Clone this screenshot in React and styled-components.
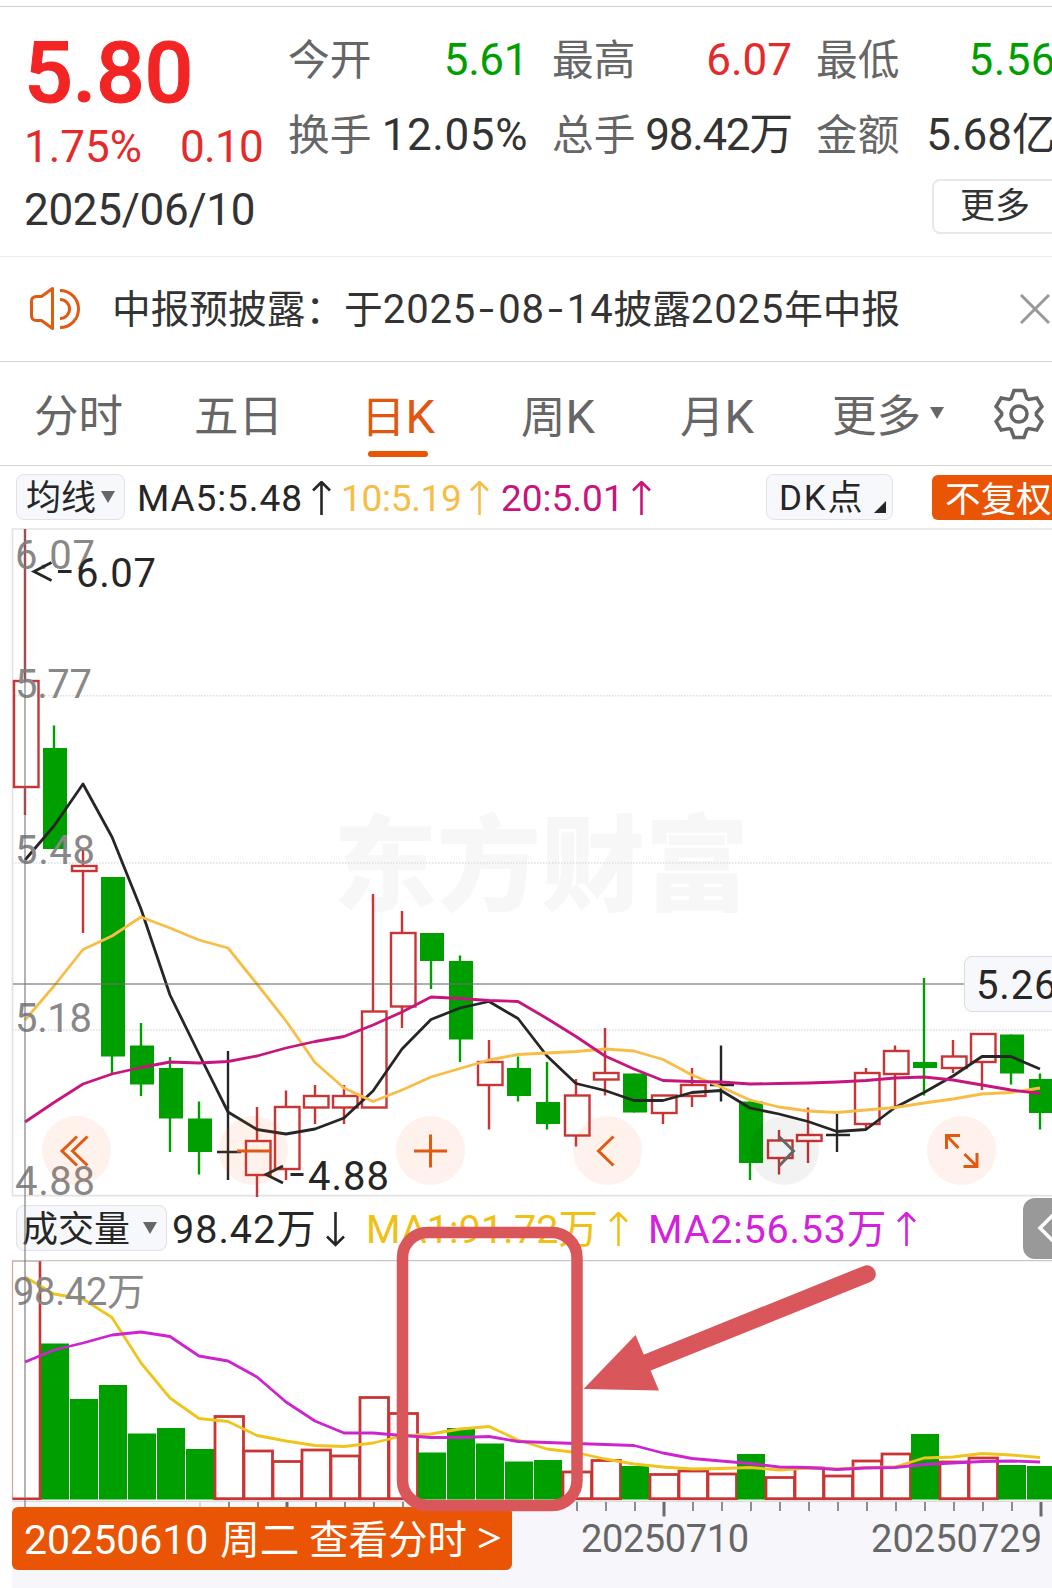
import React from "react";
import styled, { createGlobalStyle } from "styled-components";

const ORANGE = "#e95504";
const RED = "#c93535";
const GREEN = "#009f00";
const INK = "#262626";

const GlobalStyle = createGlobalStyle`
  * { box-sizing: border-box; }
  body {
    margin: 0;
    background: #fff;
    font-family: Roboto, "Noto Sans CJK SC", sans-serif;
  }
`;

const Page = styled.div`
  width: 1052px;
  height: 1588px;
  overflow: hidden;
  background: #fff;
  color: #333;
`;

const TopRule = styled.div`
  height: 7px;
  border-bottom: 1px solid #d2d2d2;
`;

/* ---------- quote summary ---------- */

const Summary = styled.section`
  display: flex;
  height: 250px;
  border-bottom: 1px solid #ebebeb;
`;

const QuoteColumn = styled.div`
  flex: none;
  width: 288px;
  padding: 21px 0 0 24px;
`;

const Price = styled.div`
  font-size: 86px;
  font-weight: 500;
  line-height: 90px;
  letter-spacing: -0.4px;
  -webkit-text-stroke: 1px #f22424;
  color: #f22424;
`;

const Change = styled.div`
  display: flex;
  gap: 38px;
  margin-top: 4px;
  font-size: 44px;
  line-height: 50px;
  color: #e42a2a;
`;

const ChangeAmount = styled.span`
  letter-spacing: -0.7px;
`;

const QuoteDate = styled.div`
  margin-top: 13px;
  font-size: 44px;
  line-height: 50px;
  letter-spacing: -0.3px;
  white-space: nowrap;
`;

const StatsColumn = styled.div`
  flex: none;
  width: 790px;
  padding-top: 28px;
`;

const StatsGrid = styled.div`
  display: grid;
  grid-template-columns: repeat(3, 241px);
  column-gap: 23px;
  row-gap: 25px;
`;

const Stat = styled.div`
  display: flex;
  justify-content: space-between;
  height: 50px;
  line-height: 50px;
  white-space: nowrap;
`;

const StatLabel = styled.span`
  padding-top: 1px;
  font-size: 41.7px;
  color: #666;
`;

const StatValue = styled.span`
  margin-right: 1px;
  font-size: 44px;
  letter-spacing: ${(p) => p.$track || 0}px;
  color: ${(p) => p.$color || "#333"};
`;

const MoreButton = styled.button`
  display: block;
  width: 140px;
  height: 55px;
  margin: 19px 0 0 644px;
  padding: 1px 0 0 26px;
  border: 2px solid #e8e8e8;
  border-radius: 8px;
  background: #fff;
  font: 35px/50px Roboto, "Noto Sans CJK SC", sans-serif;
  text-align: left;
  color: #333;
`;

/* ---------- notice ---------- */

const Notice = styled.section`
  display: flex;
  align-items: center;
  height: 105px;
  padding: 0 2px 1px 28px;
  border-bottom: 1px solid #d4d4d4;
`;

const NoticeText = styled.p`
  flex: 1;
  margin: 3px 0 0 30px;
  font-size: 38.7px;
  line-height: 50px;
  white-space: nowrap;
`;

const Digits = styled.span`
  font-size: 40px;
  letter-spacing: 0.85px;
`;

const Dash = styled.span`
  display: inline-block;
  width: 22px;
  text-align: center;
  transform: scaleX(1.35);
`;

/* ---------- tabs ---------- */

const Tabs = styled.nav`
  display: flex;
  height: 104px;
  padding-left: 34px;
  border-bottom: 1px solid #d4d4d4;
`;

const Tab = styled.div`
  flex: none;
  display: flex;
  width: ${(p) => p.$width}px;
  padding-top: 27px;
  font-size: 44.5px;
  line-height: 56px;
  white-space: nowrap;
  color: ${(p) => (p.$active ? "#e2570f" : "#666")};
`;

const TabLabel = styled.span`
  position: relative;
  height: 69px;

  &::after {
    content: "";
    display: ${(p) => (p.$active ? "block" : "none")};
    position: absolute;
    left: 7px;
    bottom: 1px;
    width: 60px;
    height: 6px;
    border-radius: 3px;
    background: ${ORANGE};
  }
`;

const TabLatin = styled.span`
  font-size: 47px;
`;

const Caret = styled.i`
  flex: none;
  width: 0;
  height: 0;
  border-left: 7.5px solid transparent;
  border-right: 7.5px solid transparent;
  border-top: 12px solid #666;
`;

const TabCaret = styled(Caret)`
  margin: 18px 0 0 9px;
`;

const GearButton = styled.div`
  padding-top: 24.5px;
`;

/* ---------- indicator rows ---------- */

const IndicatorRow = styled.div`
  display: flex;
  align-items: flex-start;
  height: ${(p) => p.$height}px;
  padding: ${(p) => p.$top}px 0 0 16px;
`;

const Chip = styled.div`
  flex: none;
  display: flex;
  align-items: center;
  justify-content: space-between;
  width: ${(p) => p.$width}px;
  height: 46px;
  margin-left: ${(p) => p.$gap || 0}px;
  padding: 0 ${(p) => p.$padRight || 9}px 0 ${(p) => p.$padLeft || 9}px;
  border: 1.5px solid #e0e2e8;
  border-radius: 8px;
  background: #f7f8fb;
  font-size: ${(p) => p.$size || 35}px;
  line-height: 44px;
  white-space: nowrap;
  color: ${INK};
`;

const ChipText = styled.span`
  padding-top: 4px;
  letter-spacing: ${(p) => p.$track || 0}px;
`;

const Corner = styled.i`
  align-self: flex-end;
  margin-bottom: 6px;
  border-left: 12px solid transparent;
  border-bottom: 12px solid ${INK};
`;

const Readout = styled.div`
  flex: none;
  display: flex;
  justify-content: space-between;
  align-items: center;
  width: ${(p) => p.$width}px;
  height: 46px;
  margin-left: ${(p) => p.$gap}px;
  padding-top: 3px;
  font-size: ${(p) => p.$size}px;
  line-height: 46px;
  letter-spacing: ${(p) => p.$track || 0}px;
  white-space: nowrap;
  color: ${(p) => p.$color};
`;

const AdjustButton = styled.div`
  flex: none;
  width: 140px;
  height: 45px;
  margin: 1px 0 0 39px;
  padding-left: 13px;
  border-radius: 6px;
  background: ${ORANGE};
  font-size: 35.5px;
  line-height: 50px;
  color: #fff;
`;

const DrawerHandle = styled.div`
  flex: none;
  width: 60px;
  height: 61px;
  margin: -7px 0 0 107px;
  padding: 10px 0 0 13px;
  border-radius: 12px;
  background: #999;
`;

/* ---------- charts ---------- */

const ChartArea = styled.section`
  position: relative;
`;

const Chart = styled.svg`
  display: block;
  overflow: visible;
`;

const CrosshairV = styled.div`
  position: absolute;
  top: 1px;
  left: 24px;
  width: 2px;
  height: 978px;
  background: rgba(110, 110, 110, 0.52);
`;

const ControlRow = styled.div`
  position: absolute;
  top: 587.5px;
  left: 42px;
  display: flex;
  gap: 108px;
`;

const RoundButton = styled.div`
  flex: none;
  width: 69px;
  height: 69px;
  border-radius: 50%;
  background: ${(p) => (p.$muted ? "rgba(0,0,0,0.05)" : "rgba(250,90,10,0.082)")};
  color: ${(p) => (p.$muted ? "#666" : "#e05a12")};
`;

const PriceTag = styled.div`
  position: absolute;
  top: 428px;
  left: 963.5px;
  width: 110px;
  height: 56px;
  padding-left: 11.5px;
  border: 1.5px solid #d9dbe1;
  border-radius: 8px;
  background: #f7f8fb;
  font-size: 40px;
  line-height: 57px;
  letter-spacing: 0.8px;
  color: ${INK};
`;

const DateBanner = styled.div`
  position: absolute;
  left: 12px;
  bottom: 18px;
  width: 499.5px;
  height: 63px;
  padding-left: 12px;
  border-radius: 6px;
  background: ${ORANGE};
  font-size: 39.5px;
  line-height: 67px;
  white-space: pre;
  color: #fff;
`;

const BannerDate = styled.span`
  margin-right: 2px;
  font-size: 41px;
`;

const BannerArrow = styled.svg`
  margin: 0 0 5px 11px;
`;

const Markup = styled.svg`
  position: absolute;
  left: 390px;
  bottom: 70px;
`;

const candles = [
  // kind, high, top, bottom, low
  ["up", 529, 681, 787, 815],
  ["down", 725.5, 748, 849, 849],
  ["up", 850, 866, 871, 933],
  ["down", 877, 877, 1056.5, 1073],
  ["down", 1023, 1045.5, 1084.5, 1096],
  ["down", 1057, 1068, 1118.5, 1152],
  ["down", 1101.5, 1118.5, 1152, 1174.5],
  ["flat", 1051, 1152, 1152, 1180],
  ["up", 1107, 1141, 1175, 1197],
  ["up", 1090.5, 1107, 1169, 1180],
  ["up", 1085, 1096, 1107.5, 1124],
  ["up", 1085, 1096, 1107.5, 1124],
  ["up", 894, 1011.5, 1107.5, 1107.5],
  ["up", 911, 933, 1006.5, 1028],
  ["down", 933, 933, 961, 989],
  ["down", 955.5, 961, 1039.5, 1062],
  ["up", 1040, 1062, 1085, 1129.5],
  ["down", 1056.5, 1068, 1096, 1101.5],
  ["down", 1062, 1102, 1124, 1129.5],
  ["up", 1079, 1095.5, 1135.5, 1146.5],
  ["up", 1028, 1073, 1079.5, 1095.5],
  ["down", 1073.5, 1073.5, 1112.5, 1112.5],
  ["up", 1095.5, 1095.5, 1113, 1124],
  ["up", 1068, 1085, 1096, 1107],
  ["flat", 1045.5, 1085, 1085, 1101.5],
  ["down", 1101.5, 1101.5, 1163, 1180],
  ["up", 1130, 1140.5, 1158, 1174.5],
  ["up", 1107.5, 1135, 1141, 1163],
  ["flat", 1113, 1135, 1135, 1152],
  ["up", 1068, 1073, 1124, 1130],
  ["up", 1045.5, 1051, 1074, 1106],
  ["down", 978, 1062, 1068, 1095.5],
  ["up", 1040, 1056.5, 1068, 1073],
  ["up", 1034, 1034, 1062, 1090],
  ["down", 1034.5, 1034.5, 1073.5, 1084.5],
  ["down", 1073.5, 1079, 1113, 1129.5],
];

const volumeTops = [
  1261, 1343.5, 1399, 1385, 1433.5, 1428, 1449, 1416.5, 1451, 1461.5, 1450, 1456,
  1397.5, 1413.5, 1452.5, 1428, 1443.5, 1461.5, 1460, 1472, 1460.5, 1466, 1474.5, 1471,
  1474, 1454, 1477.5, 1468, 1476, 1461, 1454, 1434, 1462, 1458, 1465, 1466,
];

// days that traded down on volume
const soldDays = [1, 2, 3, 4, 5, 6, 14, 15, 16, 17, 18, 21, 25, 31, 34, 35];

const ma5 = [
  860, 826, 784, 837, 909, 995, 1054, 1112, 1129.5, 1134, 1129, 1118,
  1091, 1049, 1019.5, 1008, 1001.5, 1018.5, 1056, 1083.5, 1090.5, 1100.5, 1100.5, 1092.5,
  1090.5, 1108, 1114, 1121.5, 1131.5, 1129.5, 1107.5, 1092.5, 1076, 1056.5, 1056.5, 1069,
];
const ma10 = [
  1020, 986, 949.5, 936, 917, 928, 940, 948, 984, 1021, 1062.5, 1088,
  1101.5, 1090, 1077, 1068.5, 1060, 1054.5, 1053, 1051.5, 1049, 1051, 1059.5, 1075,
  1087, 1100, 1107, 1111, 1112.5, 1110, 1107.5, 1103, 1099, 1094, 1092.5, 1088,
];
const ma20 = [
  1122, 1102.5, 1084, 1074, 1067.5, 1062, 1063, 1061.5, 1056, 1048, 1041.5, 1036.5,
  1025, 1012, 997, 998.5, 1000.5, 1001.5, 1018.5, 1036.5, 1056, 1069, 1080.5, 1081.5,
  1082, 1084, 1083.5, 1083, 1082, 1080.5, 1078, 1077, 1080, 1085, 1090, 1093.5,
];
const volMa1 = [
  1277, 1294, 1299, 1317.5, 1363, 1398, 1418.5, 1421.5, 1435.5, 1441, 1445.5, 1446.5,
  1443, 1436, 1434, 1429, 1426.5, 1440, 1449, 1452.5, 1459, 1464, 1467, 1469,
  1468.5, 1467.5, 1470, 1468, 1469, 1467.5, 1467, 1458, 1457, 1453.5, 1455, 1457.5,
];
const volMa2 = [
  1362, 1350, 1343, 1335, 1332, 1336.5, 1356, 1361, 1377, 1402, 1421, 1433,
  1433, 1435.5, 1437.5, 1437.5, 1436.5, 1441.5, 1442.5, 1443.5, 1444.5, 1445.5, 1453, 1458.5,
  1461, 1463.5, 1467, 1467.5, 1469.5, 1468, 1467.5, 1464.5, 1463, 1461.5, 1461, 1462,
];

const centre = (i) => 25 + i * 29;
const toPoints = (values) => values.map((y, i) => `${centre(i)},${y}`).join(" ");

const Line = ({ values, color }) => (
  <polyline points={toPoints(values)} fill="none" stroke={color} strokeWidth="2.8" strokeLinejoin="round" />
);

const Candle = ({ x, data }) => {
  const [kind, high, top, bottom, low] = data;
  if (kind === "flat") {
    return <path d={`M${x} ${high}V${low}M${x - 11} ${top}h24`} stroke={INK} strokeWidth="2.4" />;
  }
  if (kind === "down") {
    return (
      <g>
        <path d={`M${x} ${high}V${low}`} stroke={GREEN} strokeWidth="2.4" />
        <rect x={x - 11} y={top} width="24" height={bottom - top} fill={GREEN} />
      </g>
    );
  }
  return (
    <g stroke={RED} strokeWidth="2.4" fill="none">
      <path d={`M${x} ${high}V${top}M${x} ${bottom}V${low}`} />
      <rect x={x - 11} y={top} width="24.5" height={bottom - top} />
    </g>
  );
};

const VolumeBar = ({ x, top, down }) => {
  if (down) {
    return <rect x={x - 13} y={top} width="28" height={1499.5 - top} fill={GREEN} />;
  }
  return <rect x={x - 13} y={top} width="28.5" height={1498.7 - top} fill="#fff" stroke={RED} strokeWidth="2.8" />;
};

const Arrow = ({ down }) => (
  <svg width="19" height="35" viewBox="0 0 19 35" fill="none" stroke="currentColor" strokeWidth="2.6">
    <path d={down ? "M9.5 0V33M1 24.5L9.5 33L18 24.5" : "M9.5 34V1M1 9.5L9.5 1L18 9.5"} />
  </svg>
);

const Speaker = () => (
  <svg width="54" height="48" viewBox="28 285 54 48" fill="none" stroke="#e05a12" strokeWidth="3">
    <path d="M52.5 288.5V328.5L41.5 320.5H36.5Q31.5 320.5 31.5 315.5V301.5Q31.5 296.5 36.5 296.5H41.5Z" strokeLinejoin="round" />
    <path d="M60 290.5A18.5 18.5 0 0 1 60 327.5M60 299.5A9.5 9.5 0 0 1 60 318.5" />
  </svg>
);

const toothPath = () => {
  const tooth = [[-7.8, -15.6], [-5, -23.5], [5, -23.5], [7.8, -15.6]];
  const pts = [];
  for (let k = 0; k < 6; k++) {
    const a = (k * Math.PI) / 3;
    tooth.forEach(([x, y]) => {
      pts.push(`${(x * Math.cos(a) - y * Math.sin(a)).toFixed(2)},${(x * Math.sin(a) + y * Math.cos(a)).toFixed(2)}`);
    });
  }
  return pts.join(" ");
};

const Gear = () => (
  <svg width="54" height="54" viewBox="-27 -27 54 54" fill="none" stroke="#666" strokeWidth="3.6">
    <polygon points={toothPath()} />
    <circle r="8" />
  </svg>
);

const controls = [
  { name: "first", d: "M35 20.5L20 35L35 49.5M45.5 20.5L30.5 35L45.5 49.5" },
  { name: "minus", d: "M18 35H51" },
  { name: "plus", d: "M18 35H51M34.5 18.5V51.5" },
  { name: "prev", d: "M40.5 20.5L25.5 35L40.5 49.5" },
  { name: "next", d: "M29 20.5L43.5 35L29 50", muted: true },
  { name: "expand", d: "M33 19.5H19.5V33M19.5 19.5L31.5 32M36.5 50.5H50V37M50 50.5L37.5 38" },
];

const axisLabels = [
  ["6.07", 569],
  ["5.77", 697.5],
  ["5.48", 864],
  ["5.18", 1031.5],
  ["4.88", 1195],
];

const PriceChart = () => (
  <Chart width="1052" height="669" viewBox="0 528 1052 669">
    <text x="333" y="903" fontSize="104" fontWeight="900" fill="#f7f7f7" textLength="416">东方财富</text>
    <path d="M12.5 1196V529H1052" fill="none" stroke="#e2e2e2" strokeWidth="1.6" />
    <path d="M12 1195.7H1052" stroke="#e2e2e2" strokeWidth="1.8" />
    {[695.7, 863, 1030].map((y) => (
      <path key={y} d={`M12 ${y}H1052`} stroke="#dedede" strokeWidth="1.6" strokeDasharray="1.5 1.5" />
    ))}
    {candles.map((c, i) => (
      <Candle key={i} x={centre(i)} data={c} />
    ))}
    <Line values={ma5} color={INK} />
    <Line values={ma10} color="#f8bd47" />
    <Line values={ma20} color="#c8147d" />
    <path d="M13 984H964" stroke="#6e6e6e" strokeOpacity="0.55" strokeWidth="1.8" />
    {axisLabels.map(([label, y]) => (
      <text key={label} x="15" y={y} fontSize="40" fill="#888" textLength={label === "5.77" || label === "5.18" ? 77 : 80}>{label}</text>
    ))}
    <g fill="none" stroke={INK} strokeWidth="2.8">
      <path d="M51.5 562.5L34 571.5L51.5 580.5M58 571.5H71.5" />
      <path d="M283 1166L266 1174.5L283 1183M290.5 1174.5H303.5" />
    </g>
    <text x="76" y="586.5" fontSize="40" fill={INK} textLength="80">6.07</text>
    <text x="308" y="1189.5" fontSize="40" fill={INK} textLength="81">4.88</text>
  </Chart>
);

const VolumeChart = () => (
  <Chart width="1052" height="328" viewBox="0 1260 1052 328">
    <rect x="12" y="1501.5" width="1040" height="87" fill="#f7f7fb" />
    {volumeTops.map((top, i) => i > 0 && (
      <VolumeBar key={i} x={centre(i)} top={top} down={soldDays.includes(i)} />
    ))}
    {/* the first bar runs off the top and left of the panel */}
    <path d="M12.5 1499V1261H40" fill="none" stroke="#dba0a0" strokeWidth="1.3" />
    <path d="M40 1261V1498.7H12.5" fill="none" stroke={RED} strokeWidth="2.6" />
    <path d="M12 1260.6H1052" stroke="#c8c8c8" strokeWidth="1.2" />
    <path d="M12 1501.2H1052" stroke="#ccc" strokeWidth="1" />
    <Line values={volMa1} color="#efc41c" />
    <Line values={volMa2} color="#cc25cf" />
    {volumeTops.map((_, i) => {
      if (i < 6) return null;
      const major = i === 9 || i === 22 || i === 35;
      return (
        <path
          key={i}
          d={`M${centre(i) + 1} 1502V${major ? 1516.5 : 1511}`}
          stroke={i === 6 ? "#ccc" : "#6a6a6a"}
          strokeWidth={major ? 3 : 1.5}
        />
      );
    })}
    <text x="13" y="1304.5" fontSize="38" fill="#888" textLength="132">98.42万</text>
    <g fontSize="38" fill="#666">
      <text x="581" y="1551.5" textLength="168">20250710</text>
      <text x="871" y="1551.5" textLength="171">20250729</text>
    </g>
  </Chart>
);

const App = () => {
  return (
    <Page>
      <GlobalStyle />
      <TopRule />
      <Summary>
        <QuoteColumn>
          <Price>5.80</Price>
          <Change>
            <span>1.75%</span>
            <ChangeAmount>0.10</ChangeAmount>
          </Change>
          <QuoteDate>2025/06/10</QuoteDate>
        </QuoteColumn>
        <StatsColumn>
          <StatsGrid>
            <Stat><StatLabel>今开</StatLabel><StatValue $color={GREEN} $track={-0.4}>5.61</StatValue></Stat>
            <Stat><StatLabel>最高</StatLabel><StatValue $color="#e42a2a">6.07</StatValue></Stat>
            <Stat><StatLabel>最低</StatLabel><StatValue $color={GREEN} $track={0.4}>5.56</StatValue></Stat>
            <Stat><StatLabel>换手</StatLabel><StatValue $track={0.6}>12.05%</StatValue></Stat>
            <Stat><StatLabel>总手</StatLabel><StatValue $track={-1.3}>98.42万</StatValue></Stat>
            <Stat><StatLabel>金额</StatLabel><StatValue>5.68亿</StatValue></Stat>
          </StatsGrid>
          <MoreButton>更多</MoreButton>
        </StatsColumn>
      </Summary>

      <Notice>
        <Speaker />
        <NoticeText>
          中报预披露：于<Digits>2025<Dash>-</Dash>08<Dash>-</Dash>14</Digits>披露<Digits>2025</Digits>年中报
        </NoticeText>
        <svg width="30" height="30" viewBox="0 0 30 30" stroke="#999" strokeWidth="3">
          <path d="M1 1L29 29M29 1L1 29" />
        </svg>
      </Notice>

      <Tabs>
        <Tab $width={160}><TabLabel>分时</TabLabel></Tab>
        <Tab $width={167}><TabLabel>五日</TabLabel></Tab>
        <Tab $width={160} $active><TabLabel $active>日<TabLatin>K</TabLatin></TabLabel></Tab>
        <Tab $width={159}><TabLabel>周<TabLatin>K</TabLatin></TabLabel></Tab>
        <Tab $width={152}><TabLabel>月<TabLatin>K</TabLatin></TabLabel></Tab>
        <Tab $width={160}>
          <TabLabel>更多</TabLabel>
          <TabCaret />
        </Tab>
        <GearButton><Gear /></GearButton>
      </Tabs>

      <IndicatorRow $height={62} $top={8}>
        <Chip $width={109}><ChipText>均线</ChipText><Caret /></Chip>
        <Readout $width={194} $gap={12} $size={37} $track={0.9} $color={INK}>MA5:5.48<Arrow /></Readout>
        <Readout $width={148} $gap={10} $size={37} $track={-0.3} $color="#f8bd47">10:5.19<Arrow /></Readout>
        <Readout $width={150} $gap={12} $size={37} $track={0} $color="#c8147d">20:5.01<Arrow /></Readout>
        <Chip $width={127} $gap={115} $padRight={6} $padLeft={12}><ChipText $track={1.8}>DK点</ChipText><Corner /></Chip>
        <AdjustButton>不复权</AdjustButton>
      </IndicatorRow>

      <ChartArea>
        <PriceChart />
        <IndicatorRow $height={63} $top={8}>
          <Chip $width={151} $size={36} $padLeft={5}><ChipText>成交量</ChipText><Caret /></Chip>
          <Readout $width={173} $gap={5} $size={39.5} $track={1} $color={INK}>98.42万<Arrow down /></Readout>
          <Readout $width={262} $gap={21} $size={39.5} $track={0.1} $color="#f0c114">MA1:91.72万<Arrow /></Readout>
          <Readout $width={268} $gap={20} $size={39.5} $track={0.8} $color="#d421dc">MA2:56.53万<Arrow /></Readout>
          <DrawerHandle>
            <svg width="30" height="40" viewBox="0 0 30 40" fill="none" stroke="#fff" strokeWidth="3.6">
              <path d="M21 3L4 20L21 37" />
            </svg>
          </DrawerHandle>
        </IndicatorRow>
        <VolumeChart />

        <ControlRow>
          {controls.map((c) => (
            <RoundButton key={c.name} $muted={c.muted}>
              <svg width="69" height="69" viewBox="0 0 69 69" fill="none" stroke="currentColor" strokeWidth="3">
                <path d={c.d} />
              </svg>
            </RoundButton>
          ))}
        </ControlRow>
        <CrosshairV />
        <PriceTag>5.26</PriceTag>
        <DateBanner>
          <BannerDate>20250610</BannerDate> 周二 查看分时
          <BannerArrow width="22" height="22" viewBox="0 0 22 22" fill="none" stroke="#fff" strokeWidth="2.8">
            <path d="M1 2L20 11L1 20" />
          </BannerArrow>
        </DateBanner>
        {/* hand-drawn highlight over the shrinking volume */}
        <Markup width="500" height="300" viewBox="390 1218 500 300">
          <rect x="402.5" y="1232.5" width="174.5" height="273" rx="25" fill="none" stroke="#d9565b" strokeWidth="11.5" />
          <path d="M640 1365.5L867 1274" stroke="#d9565b" strokeWidth="17.5" strokeLinecap="round" />
          <path d="M583.5 1389L635.5 1335L659 1390.5Z" fill="#d9565b" />
        </Markup>
      </ChartArea>
    </Page>
  );
};

export default App;
